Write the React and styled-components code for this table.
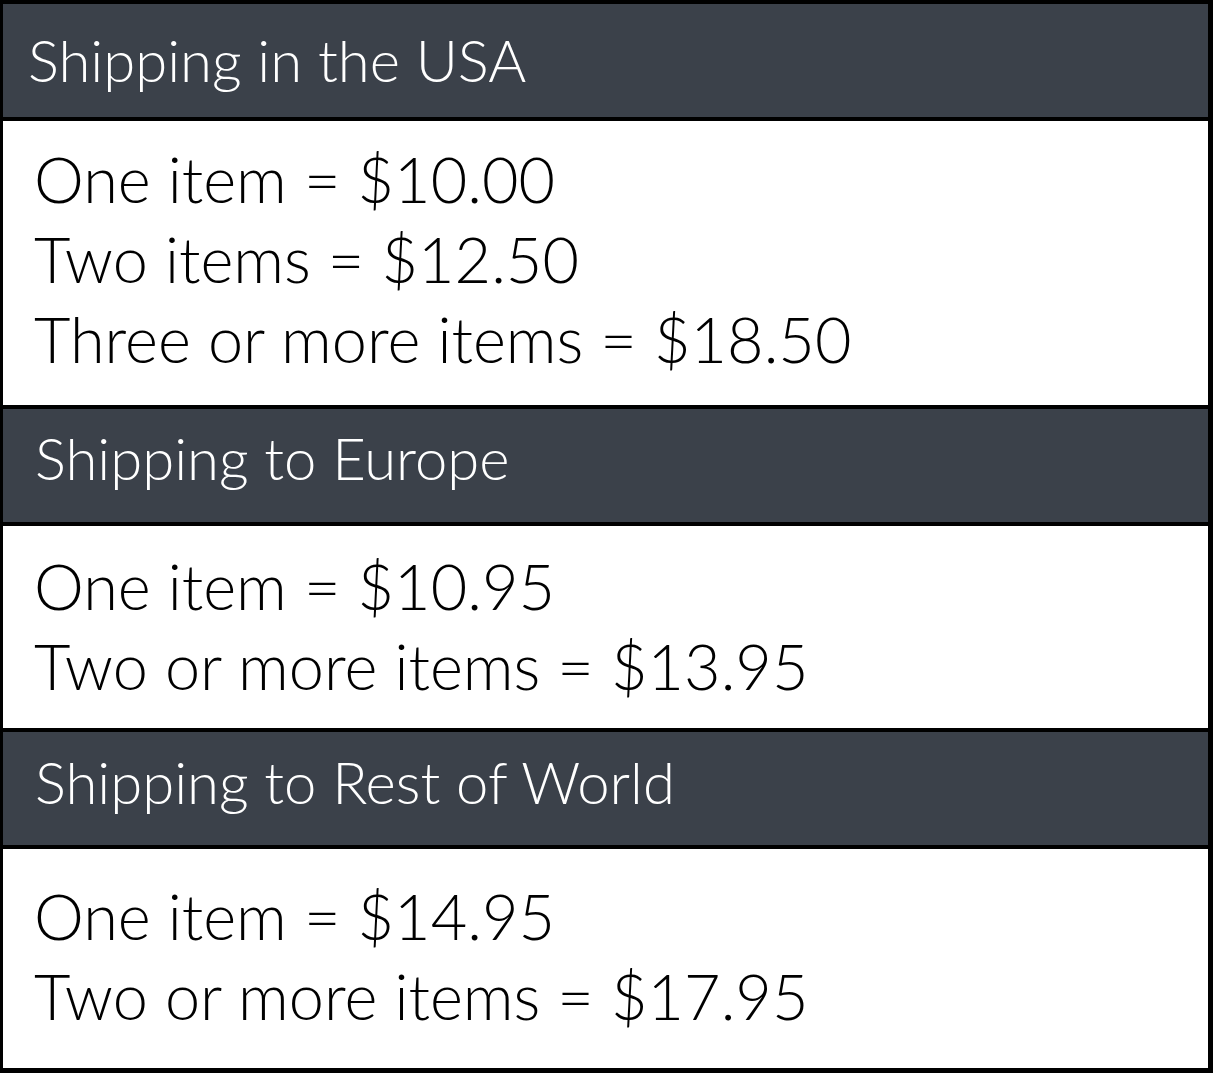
import React from "react";
import styled, { createGlobalStyle } from "styled-components";

const Global = createGlobalStyle`
  html, body { margin: 0; padding: 0; background: #ffffff; }
  body { font-family: Lato, "Open Sans", sans-serif; }
`;

const Table = styled.div`
  width: 1213px;
  height: 1073px;
  box-sizing: border-box;
  border-top: 4px solid #000;
  border-left: 3px solid #000;
  border-right: 5px solid #000;
  border-bottom: 5px solid #000;
  display: flex;
  flex-direction: column;
  background: #fff;
`;

const Header = styled.div`
  height: 117px;
  box-sizing: border-box;
  background: #3b414a;
  color: #fff;
  font-weight: 300;
  font-size: 58px;
  line-height: 70px;
  white-space: nowrap;
  padding-top: ${(p) => p.$top}px;
  padding-left: ${(p) => p.$indent}px;
  border-bottom: 4px solid #000;
`;

const Body = styled.div`
  height: ${(p) => p.$h}px;
  box-sizing: border-box;
  padding-top: ${(p) => p.$top}px;
  padding-left: 31px;
  color: #000;
  font-weight: 300;
  font-size: 63px;
  line-height: 80px;
  border-bottom: ${(p) => (p.$last ? "none" : "4px solid #000")};
`;

const Line = styled.div`
  white-space: nowrap;
`;

const sections = [
  {
    title: "Shipping in the USA",
    indent: 25,
    headTop: 21,
    h: 288,
    top: 18,
    lines: ["One item = $10.00", "Two items = $12.50", "Three or more items = $18.50"],
  },
  {
    title: "Shipping to Europe",
    indent: 32,
    headTop: 14,
    h: 206,
    top: 20,
    lines: ["One item = $10.95", "Two or more items = $13.95"],
  },
  {
    title: "Shipping to Rest of World",
    indent: 32,
    headTop: 15,
    h: 219,
    top: 27,
    lines: ["One item = $14.95", "Two or more items = $17.95"],
    last: true,
  },
];

export default function App() {
  return (
    <>
      <Global />
      <Table>
        {sections.map((s) => (
          <React.Fragment key={s.title}>
            <Header $indent={s.indent} $top={s.headTop}>
              {s.title}
            </Header>
            <Body $h={s.h} $top={s.top} $last={s.last}>
              {s.lines.map((l) => (
                <Line key={l}>{l}</Line>
              ))}
            </Body>
          </React.Fragment>
        ))}
      </Table>
    </>
  );
}
